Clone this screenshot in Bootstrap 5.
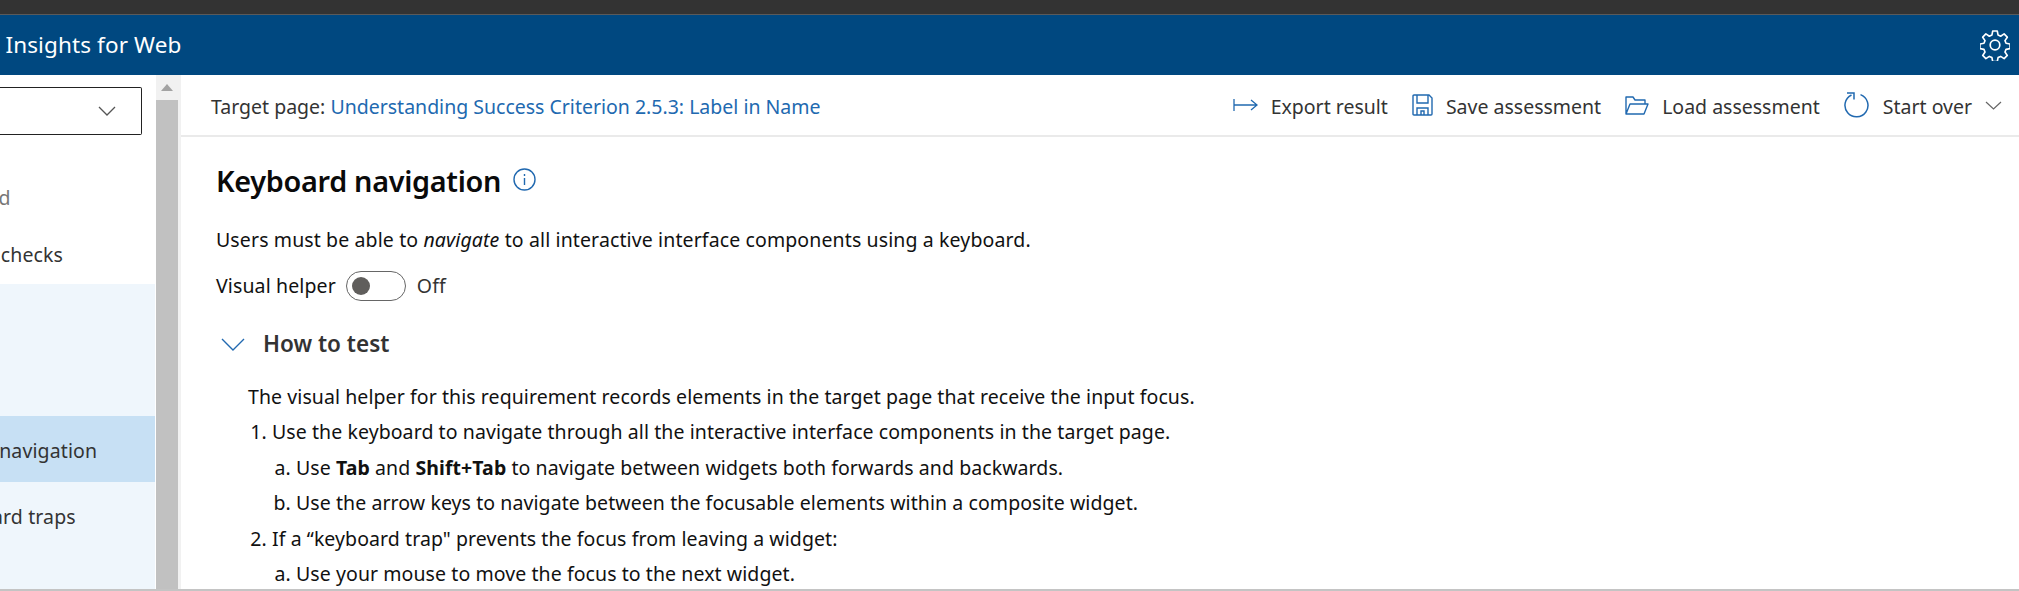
<!DOCTYPE html>
<html lang="en">
<head>
  <meta charset="UTF-8" />
  <meta name="viewport" content="width=device-width, initial-scale=1" />
  <title>Accessibility Insights for Web</title>
  <link href="https://cdn.jsdelivr.net/npm/bootstrap@5.3.0/dist/css/bootstrap.min.css" rel="stylesheet" />
  <style>
    html, body { height: 100%; }
    body {
      overflow: hidden;
      background: #fff;
      color: #111;
      font-family: "Noto Sans", "Liberation Sans", sans-serif;
      font-size: 19.5px;
      letter-spacing: 0.12px;
    }
    .top-strip { height: 15px; background: #333; border-bottom: 1px solid #5a5a5a; }
    .app-bar { height: 60px; background: #004880; color: #fff; font-size: 22.5px; padding-right: 9px; }
    .app-title { margin-left: -129px; white-space: nowrap; }
    .page-body { height: 516px; border-bottom: 2px solid #c4c4c4; }

    .side-nav { width: 155px; flex: none; overflow: hidden; }
    .side-select {
      height: 48px; flex: none; margin: 12px 13px 0 0; border: 1.5px solid #222; border-left: 0; border-radius: 0 2px 2px 0;
      padding-right: 25px;
    }
    .side-item { height: 57px; white-space: nowrap; color: #333; }
    .side-item.is-muted { height: 56px; color: #777; }
    .side-item.is-muted span { margin-left: -130px; }
    .side-item.is-auto span { margin-left: -108px; }
    .side-plain { padding-top: 35px; flex: none; }
    .side-group { background: #eff6fc; margin-top: 1px; padding-top: 132px; }
    .side-group .side-item { height: 70px; }
    .side-group .side-item span { margin-left: -65px; }
    .side-group .side-item.is-active { height: 66px; padding-top: 4px; background: #c7e0f4; }
    .side-group .side-item.is-active span { margin-left: -94px; }

    .scroll-rail { width: 22px; flex: none; margin-left: 1px; background: #f1f1f1; }
    .scroll-arrow { height: 25px; }
    .scroll-thumb { background: #c1c1c1; }
    .rail-edge { width: 3px; flex: none; background: #f1f1f1; }

    .main-pane { min-width: 0; }
    .command-bar { height: 62px; border-bottom: 2px solid #eaeaea; padding: 3px 17px 0 30px; flex: none; color: #333; letter-spacing: 0; }
    .target-link { color: #2169b0; text-decoration: none; }
    .cmd-item { gap: 13px; margin-left: 24px; }
    .cmd-item svg { display: block; margin-top: -3px; }

    .detail-pane { padding: 24px 35px 0; }
    .detail-title { font-size: 28.8px; font-weight: 600; color: #0a0a0a; letter-spacing: -0.3px; margin: 0; line-height: 40px; }
    .info-icon { margin-top: -4px; }
    .detail-desc { margin: 24px 0 0; line-height: 30px; }
    .helper-row { height: 30px; margin-top: 16px; }
    .fake-toggle {
      width: 60px; height: 30px; border: 1px solid #666; border-radius: 15px; margin: 0 11px 0 10px; padding-left: 5px;
    }
    .fake-toggle i { display: block; width: 18px; height: 18px; border-radius: 50%; background: #605e5c; }
    .off-label { color: #333; }
    .howto-head { margin-top: 27px; height: 32px; color: #333; font-size: 22.5px; font-weight: 600; letter-spacing: 0; gap: 18px; padding-left: 5px; }
    .howto-body { padding: 19px 0 0 32px; line-height: 35.4px; letter-spacing: 0.08px; }
    .howto-body p { margin: 0; }
    .howto-body ol { margin: 0; padding-left: 24px; }
    .howto-body ol ol { list-style-type: lower-alpha; padding-left: 24px; }
    .howto-body b { font-weight: 700; }
  </style>
</head>
<body>

<div class="top-strip"></div>

<!-- app title bar -->
<div class="app-bar d-flex align-items-center justify-content-between">
  <div class="app-title">Accessibility Insights for Web</div>
  <svg width="30" height="32" viewBox="0 0 30 32" fill="none" stroke="#fff" stroke-width="1.7" stroke-linejoin="round">
    <path d="M12.6 1.5h4.8l.8 4.2 2.7 1.2 3.6-2.4 3.3 3.4-2.4 3.6 1.1 2.7 4.2.8v4.8l-4.2.8-1.1 2.7 2.4 3.6-3.3 3.4-3.6-2.4-2.7 1.2-.8 4.2h-4.8l-.8-4.2-2.7-1.2-3.6 2.4-3.3-3.4 2.4-3.6-1.1-2.7-4.2-.8v-4.8l4.2-.8 1.1-2.7-2.4-3.6 3.3-3.4 3.6 2.4 2.7-1.2z" transform="translate(.6 .6) scale(.96)"/>
    <circle cx="15" cy="16" r="4.8"/>
  </svg>
</div>

<div class="page-body d-flex">

  <!-- left nav, scrolled off to the left -->
  <div class="side-nav d-flex flex-column">
    <div class="side-select d-flex align-items-center justify-content-end">
      <svg width="18" height="10" viewBox="0 0 18 10" fill="none" stroke="#555" stroke-width="1.3"><path d="M1 1l8 8 8-8"/></svg>
    </div>
    <div class="side-plain">
      <div class="side-item is-muted d-flex align-items-center"><span>Getting started</span></div>
      <div class="side-item is-auto d-flex align-items-center"><span>Automated checks</span></div>
    </div>
    <div class="side-group flex-grow-1">
      <div class="side-item is-active d-flex align-items-center"><span>Keyboard navigation</span></div>
      <div class="side-item d-flex align-items-center"><span>Keyboard traps</span></div>
    </div>
  </div>

  <div class="scroll-rail d-flex flex-column">
    <div class="scroll-arrow d-flex justify-content-center align-items-center">
      <svg width="12" height="7" viewBox="0 0 12 7"><path d="M6 0l6 7H0z" fill="#a3a3a3"/></svg>
    </div>
    <div class="scroll-thumb flex-grow-1"></div>
  </div>
  <div class="rail-edge"></div>

  <div class="main-pane flex-grow-1 d-flex flex-column">
    <div class="command-bar d-flex align-items-center justify-content-between">
      <div>Target page: <a class="target-link" href="#">Understanding Success Criterion 2.5.3: Label in Name</a></div>
      <div class="d-flex align-items-center">
        <div class="cmd-item d-flex align-items-center">
          <svg width="25" height="12" viewBox="0 0 25 12" fill="none" stroke="#2169b0" stroke-width="1.3"><path d="M1 0v12M1 6h23M18 1l6 5-6 5"/></svg>
          <span>Export result</span>
        </div>
        <div class="cmd-item d-flex align-items-center">
          <svg width="21" height="22" viewBox="0 0 21 22" fill="none" stroke="#2169b0" stroke-width="1.4"><path d="M1 2q0-1 1-1h15l3 3v16q0 1-1 1H2q-1 0-1-1zM5 1v8h11V1M5 21v-7h11v7M9 21v-4h3v4"/></svg>
          <span>Save assessment</span>
        </div>
        <div class="cmd-item d-flex align-items-center">
          <svg width="24" height="19" viewBox="0 0 24 19" fill="none" stroke="#2169b0" stroke-width="1.4" stroke-linejoin="round"><path d="M1 18V1h7l2 3h10v4M1 18l4-10h18l-4 10z"/></svg>
          <span>Load assessment</span>
        </div>
        <div class="cmd-item d-flex align-items-center">
          <svg width="26" height="26" viewBox="0 0 26 26" fill="none" stroke="#2169b0" stroke-width="1.5"><path d="M16.5 2.6A11.5 11.5 0 1 1 7.5 3M3 1h7v6.5"/></svg>
          <span>Start over</span>
          <svg width="17" height="9" viewBox="0 0 17 9" fill="none" stroke="#666" stroke-width="1.2"><path d="M1 1l7.5 7L16 1"/></svg>
        </div>
      </div>
    </div>

    <div class="detail-pane">
      <div class="d-flex align-items-center gap-1">
        <h1 class="detail-title">Keyboard navigation</h1>
        <svg class="info-icon ms-2" width="23" height="23" viewBox="0 0 23 23" fill="none" stroke="#2169b0" stroke-width="1.4"><circle cx="11.5" cy="11.5" r="10.5"/><path d="M11.5 10v7M11.5 6v2"/></svg>
      </div>
      <p class="detail-desc">Users must be able to <em>navigate</em> to all interactive interface components using a keyboard.</p>
      <div class="helper-row d-flex align-items-center">
        <span>Visual helper</span>
        <div class="fake-toggle d-flex align-items-center"><i></i></div>
        <span class="off-label">Off</span>
      </div>
      <div class="howto-head d-flex align-items-center">
        <svg width="24" height="13" viewBox="0 0 24 13" fill="none" stroke="#2169b0" stroke-width="1.4"><path d="M1 1l11 11L23 1"/></svg>
        <span>How to test</span>
      </div>
      <div class="howto-body">
        <p>The visual helper for this requirement records elements in the target page that receive the input focus.</p>
        <ol>
          <li>Use the keyboard to navigate through all the interactive interface components in the target page.
            <ol>
              <li>Use <b>Tab</b> and <b>Shift+Tab</b> to navigate between widgets both forwards and backwards.</li>
              <li>Use the arrow keys to navigate between the focusable elements within a composite widget.</li>
            </ol>
          </li>
          <li>If a “keyboard trap" prevents the focus from leaving a widget:
            <ol>
              <li>Use your mouse to move the focus to the next widget.</li>
            </ol>
          </li>
        </ol>
      </div>
    </div>
  </div>
</div>

<script src="https://cdn.jsdelivr.net/npm/bootstrap@5.3.0/dist/js/bootstrap.bundle.min.js"></script>
</body>
</html>
